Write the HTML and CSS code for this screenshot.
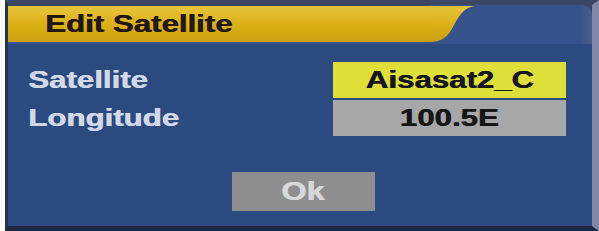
FILE: index.html
```html
<!DOCTYPE html>
<html lang="en">
<head>
    <meta charset="UTF-8">
    <meta name="viewport" content="width=device-width, initial-scale=1.0">
    <title>Edit Satellite</title>
    <link rel="stylesheet" href="styles.css">
</head>
<body>
    <div class="dialog">
        <div class="header">
            <div class="title"><span class="wide">Edit Satellite</span></div>
            <svg class="curve" width="46" height="39" viewBox="0 0 46 39">
                <rect width="46" height="39" fill="#37538c"/>
                <path d="M0 1 H44 C34 3 30 9 24 20 C18 32 12 37 0 37 Z" fill="url(#gold)"/>
                <defs>
                    <linearGradient id="gold" x1="0" y1="0" x2="0" y2="1">
                        <stop offset="0" stop-color="#e8c43c"/>
                        <stop offset="0.55" stop-color="#d9af14"/>
                        <stop offset="1" stop-color="#c99f10"/>
                    </linearGradient>
                </defs>
            </svg>
            <div class="header-rest"></div>
        </div>
        <div class="content">
            <div class="row">
                <div class="label"><span class="wide">Satellite</span></div>
                <div class="value yellow"><span class="wide mid">Aisasat2_C</span></div>
            </div>
            <div class="row">
                <div class="label"><span class="wide">Longitude</span></div>
                <div class="value gray"><span class="wide mid">100.5E</span></div>
            </div>
            <div class="actions">
                <div class="button"><span class="wide mid">Ok</span></div>
            </div>
        </div>
    </div>
</body>
</html>
```
FILE: styles.css
```css
*{
    box-sizing: border-box;
}
body{
    margin: 0;
    padding-left: 5px;
    background-color: #fff;
    font-family: 'Liberation Sans', Arial, sans-serif;
    font-weight: bold;
    font-size: 24px;
}
.dialog{
    width: 594px;
    height: 231px;
    display: flex;
    flex-direction: column;
    background-color: #2b4a7f;
    border-top: 5px solid #3c4766;
    border-left: 3px solid #26334f;
    border-right: 7px solid #7f88a6;
    border-bottom: 5px solid #1d2b47;
}
.wide{
    display: inline-block;
    transform: scaleX(1.3);
    transform-origin: left center;
    text-shadow: 0.6px 0 0 currentColor;
}
.wide.mid{
    transform-origin: center center;
}
.header{
    display: flex;
    height: 39px;
    background-color: #3c4766;
}
.title{
    width: 422px;
    display: flex;
    align-items: center;
    padding-left: 37px;
    padding-bottom: 2px;
    color: #24170f;
    background: linear-gradient(#3c4766 1px, #e8c43c 1px, #d9af14 55%, #c99f10 95%, #37538c 95%);
}
.curve{
    display: block;
}
.header-rest{
    flex: 1;
    background: linear-gradient(90deg, #37538c 90%, #4a5f8c);
    border-top-right-radius: 10px;
}
.content{
    flex: 1;
    padding: 18px 26px 0 20px;
    display: flex;
    flex-direction: column;
    gap: 2px;
}
.row{
    display: flex;
    align-items: center;
    height: 36px;
}
.label{
    flex: 1;
    color: #d2d8e8;
}
.value{
    width: 233px;
    height: 36px;
    display: flex;
    align-items: center;
    justify-content: center;
    color: #161616;
}
.yellow{
    background-color: #dfdf3a;
}
.gray{
    background-color: #a7a7a9;
}
.actions{
    display: flex;
    justify-content: center;
    padding-left: 12px;
    margin-top: 34px;
}
.button{
    width: 143px;
    height: 39px;
    display: flex;
    align-items: center;
    justify-content: center;
    background-color: #8e8e90;
    color: #d8d8d8;
    font-size: 25px;
}
```
